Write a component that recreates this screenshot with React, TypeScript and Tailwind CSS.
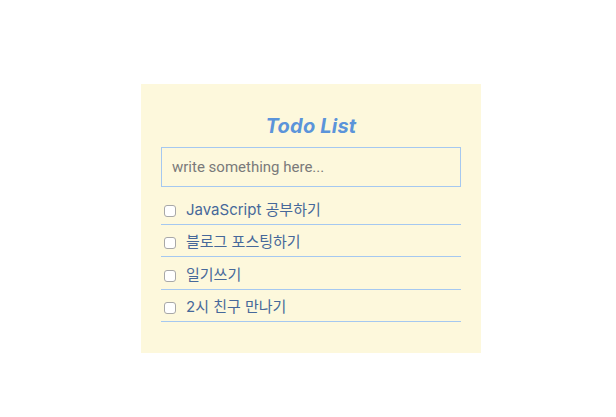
import React from "react";

const items = ["JavaScript 공부하기", "블로그 포스팅하기", "일기쓰기", "2시 친구 만나기"];

export default function App() {
  return (
    <div className="min-h-[417px] w-full bg-white pl-[141px] pt-[84px]" style={{ fontFamily: 'Inter, "Noto Sans CJK KR", sans-serif' }}>
      <div className="w-[340px] bg-[#fdf8dc] px-5 pt-[28px] pb-[31px]">
        <h1 className="text-center text-[20px] leading-[28px] font-bold italic tracking-[0.2px] text-[#5b94da]">Todo List</h1>
        <input
          type="text"
          placeholder="write something here..."
          className="mt-[7px] box-border h-[40px] w-full border border-[#a5c8f0] bg-transparent px-[10px] text-[15px] text-[#333] outline-none placeholder:text-[#7a7a7a]"
          style={{ fontFamily: 'Roboto, "Noto Sans CJK KR", sans-serif' }}
        />
        <ul className="mt-[5px]">
          {items.map((t) => (
            <li key={t} className="flex h-[32.5px] items-center border-b border-[#a5c8f0] pt-[4px]">
              <input
                type="checkbox"
                className="ml-[3px] mr-[4px] mt-[2px] h-[12px] w-[12px] appearance-none rounded-[3px] border border-[#a8a8a8] bg-white"
              />
              <span className="ml-[6px] text-[15px] text-[#46689a]">{t}</span>
            </li>
          ))}
        </ul>
      </div>
    </div>
  );
}
